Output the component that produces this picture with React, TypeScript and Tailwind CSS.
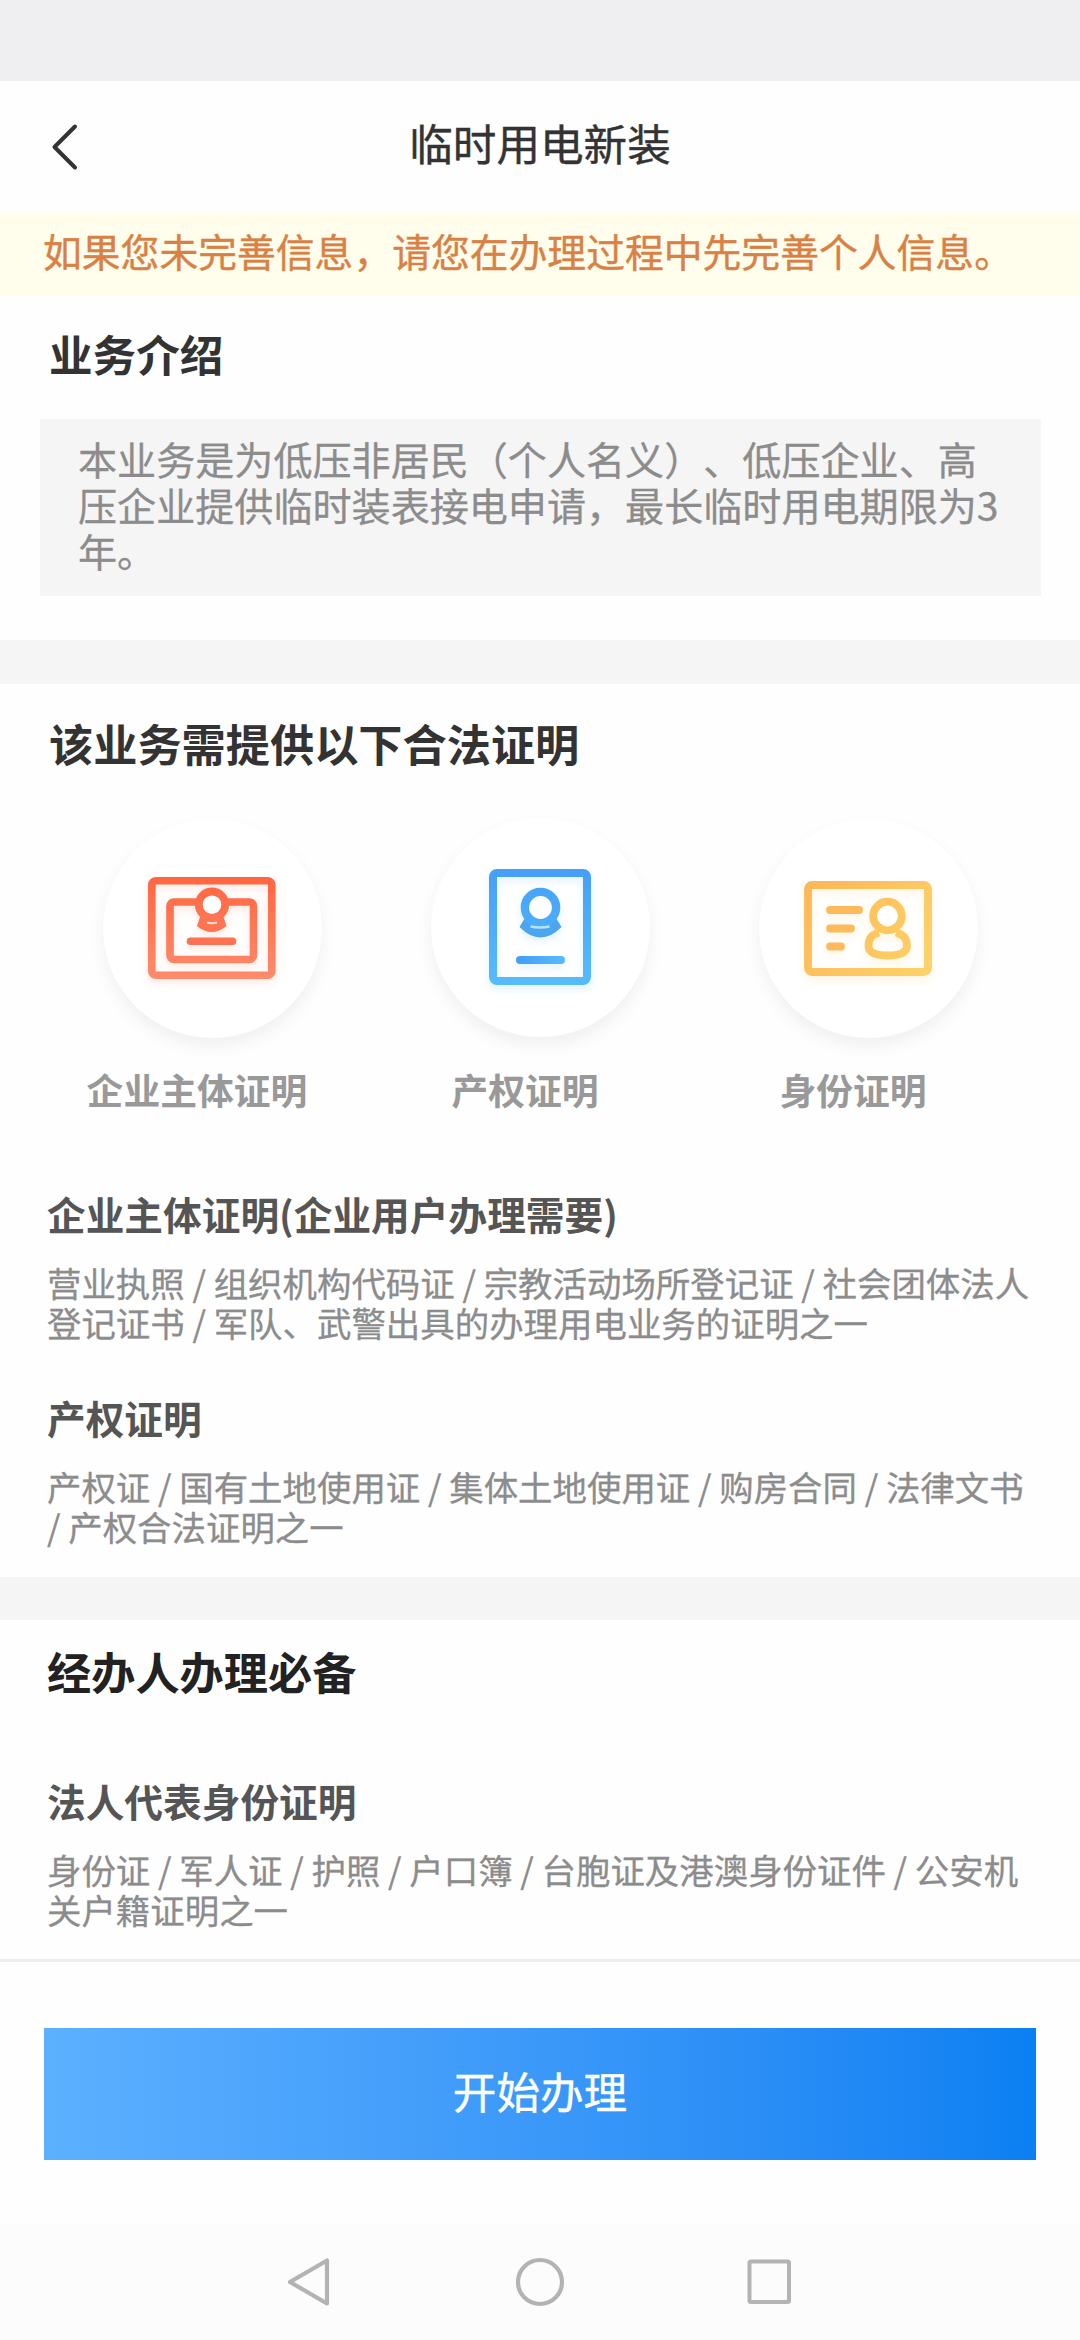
import React from "react";

function BusinessIcon() {
  return (
    <svg className="h-[126px] w-[146px] overflow-visible" viewBox="0 0 146 126" fill="none">
      <defs>
        <linearGradient id="orange" x1="0" y1="0" x2="0" y2="102" gradientUnits="userSpaceOnUse">
          <stop stopColor="#ff6640" />
          <stop offset="1" stopColor="#ff8a6c" />
        </linearGradient>
      </defs>
      <g className="drop-shadow-[0_4px_4px_rgba(255,110,70,0.16)]">
        <rect x="3.8" y="3.8" width="120" height="94.5" rx="4" stroke="url(#orange)" strokeWidth="7.6" />
        <rect x="22" y="25" width="83.5" height="57.5" rx="4" stroke="url(#orange)" strokeWidth="7.6" />
        <path d="M52 40 L49 49 Q63.500 61 78.500 49 L75.500 40 Z" fill="#fd7452" />
        <circle cx="64" cy="27.700" r="13.200" fill="#fff" stroke="url(#orange)" strokeWidth="7.800" />
        <path d="M59 45.500 Q64 47 69 45.500" stroke="#ffe3db" strokeWidth="2.200" />
        <path d="M42.500 64.300H84.500" stroke="#fd7250" strokeWidth="7.600" strokeLinecap="round" />
      </g>
    </svg>
  );
}

function PropertyIcon() {
  return (
    <svg className="h-[126px] w-[146px] overflow-visible" viewBox="0 0 146 126" fill="none">
      <defs>
        <linearGradient id="blue" x1="0" y1="0" x2="0" y2="117" gradientUnits="userSpaceOnUse">
          <stop stopColor="#469ff8" />
          <stop offset="1" stopColor="#55bdfb" />
        </linearGradient>
        <linearGradient id="blueLine" x1="27" y1="0" x2="77" y2="0" gradientUnits="userSpaceOnUse">
          <stop stopColor="#439df8" />
          <stop offset="1" stopColor="#58bdf8" />
        </linearGradient>
      </defs>
      <g className="drop-shadow-[0_4px_4px_rgba(70,170,250,0.16)]">
        <rect x="4" y="4" width="94" height="108" rx="4" stroke="url(#blue)" strokeWidth="8" />
        <path d="M36 49 L30.500 58 Q51.500 79 72.500 58 L67 49 Z" fill="#4aa6ee" />
        <circle cx="51.500" cy="38.500" r="15.600" fill="#fff" stroke="url(#blue)" strokeWidth="8.400" />
        <path d="M41.500 57.500 Q51 59.500 60.500 57.500" stroke="#b5e3fc" strokeWidth="2.400" />
        <path d="M31 91H72" stroke="url(#blueLine)" strokeWidth="8" strokeLinecap="round" />
      </g>
    </svg>
  );
}

function IdentityIcon() {
  return (
    <svg className="h-[126px] w-[146px] overflow-visible" viewBox="0 0 146 126" fill="none">
      <defs>
        <linearGradient id="amber" x1="0" y1="0" x2="128" y2="94" gradientUnits="userSpaceOnUse">
          <stop stopColor="#fdb656" />
          <stop offset="1" stopColor="#fdd369" />
        </linearGradient>
      </defs>
      <g className="drop-shadow-[0_4px_4px_rgba(255,180,70,0.16)]" stroke="url(#amber)" strokeWidth="7.800">
        <rect x="4" y="4" width="120" height="87" rx="4" />
        <path d="M75 51.500C67.500 53.500 64.500 58.500 64.500 64.500C64.500 71.500 72 74.500 83.700 74.500C95.500 74.500 103 71.500 103 64.500C103 58.500 99.500 53.500 92 51.500" />
        <circle cx="83.500" cy="35" r="14.300" fill="#fff" />
        <path d="M26 29H55M26 47.500H47M26 65.500H37" stroke="#fdba5a" strokeLinecap="round" />
      </g>
    </svg>
  );
}

const proofs = [
  { label: "企业主体证明", icon: <BusinessIcon />, disc: "pl-[45px] pt-[58px]" },
  { label: "产权证明", icon: <PropertyIcon />, disc: "pl-[58px] pt-[51px] -mt-[1px]" },
  { label: "身份证明", icon: <IdentityIcon />, disc: "pl-[45px] pt-[62px]" },
];

function Detail({ title, lines }: { title: string; lines: string[] }) {
  return (
    <section className="pl-[47px]">
      <h3 className="text-[38.7px] leading-[56px] font-bold text-[#555]">{title}</h3>
      <p className="mt-[21px] text-[34.450px] leading-[40.400px] text-[#8c8c8c] [-webkit-text-stroke:0.3px_#8c8c8c]">
        {lines.map((line) => (
          <span key={line} className="block">{line}</span>
        ))}
      </p>
    </section>
  );
}

export default function App() {
  return (
    <div
      lang="zh-CN"
      className="flex h-[2340px] w-[1080px] flex-col overflow-hidden bg-[#fefefe] font-['Noto_Sans_CJK_SC','Noto_Sans',sans-serif] whitespace-nowrap [text-spacing-trim:space-all]"
    >
      <div className="h-[81px] shrink-0 bg-[#efeff1]" />
      <header className="grid h-[131px] shrink-0 grid-cols-[200px_1fr_200px] items-center">
        <svg className="ml-[50px] h-12 w-7" viewBox="0 0 28 48" fill="none">
          <path d="M25 3.500L4.500 24L25 44.500" stroke="#333" strokeWidth="4" strokeLinecap="round" strokeLinejoin="round" />
        </svg>
        <h1 className="pb-[10px] text-center text-[43.6px] leading-[60px] text-[#333] [-webkit-text-stroke:0.4px_#333]">
          临时用电新装
        </h1>
      </header>
      <div className="flex h-[84px] shrink-0 items-center bg-[#fffdeb] pb-[9px] pl-[43px] text-[38.8px] leading-[56px] text-[#d98145] [-webkit-text-stroke:0.4px_#d98145]">
        如果您未完善信息，请您在办理过程中先完善个人信息。
      </div>

      <section className="h-[344px] shrink-0 pt-[26px] pr-[39px] pl-10">
        <h2 className="pl-[9px] text-[43.6px] leading-[62px] font-bold text-[#333]">业务介绍</h2>
        <p className="mt-[35px] h-[177px] bg-[#f5f5f5] pt-[16px] pl-[38px] text-[39.100px] leading-[46px] text-[#8c8c8c] [-webkit-text-stroke:0.3px_#8c8c8c]">
          本业务是为低压非居民（个人名义）、低压企业、高<br />
          压企业提供临时装表接电申请，最长临时用电期限为3<br />
          年。
        </p>
      </section>
      <div className="h-11 shrink-0 bg-[#f5f5f5]" />

      <section className="h-[893px] shrink-0 pt-[28px]">
        <h2 className="pl-[49px] text-[44.2px] leading-[62px] font-bold text-[#333]">该业务需提供以下合法证明</h2>
        <div className="mt-[45px] grid h-[297px] grid-cols-[328px_328px_328px] pl-[33px]">
          {proofs.map(({ label, icon, disc }) => (
            <div key={label} className="flex h-[297px] flex-col items-center justify-between">
              <div className={`ml-[31px] h-[219px] w-[219px] shrink-0 rounded-full bg-white shadow-[0_8px_16px_rgba(40,60,70,0.07)] ${disc}`}>
                {icon}
              </div>
              <span className="text-[36.8px] leading-[54px] font-bold text-[#999]">{label}</span>
            </div>
          ))}
        </div>
        <div className="mt-[69px] flex flex-col gap-[46px]">
          <Detail
            title="企业主体证明(企业用户办理需要)"
            lines={[
              "营业执照 / 组织机构代码证 / 宗教活动场所登记证 / 社会团体法人",
              "登记证书 / 军队、武警出具的办理用电业务的证明之一",
            ]}
          />
          <Detail
            title="产权证明"
            lines={[
              "产权证 / 国有土地使用证 / 集体土地使用证 / 购房合同 / 法律文书",
              "/ 产权合法证明之一",
            ]}
          />
        </div>
      </section>
      <div className="h-[43px] shrink-0 bg-[#f5f5f5]" />

      <section className="h-[339px] shrink-0 pt-[20px]">
        <h2 className="mb-[70px] pl-[47px] text-[44.2px] leading-[62px] font-bold text-[#222]">经办人办理必备</h2>
        <Detail
          title="法人代表身份证明"
          lines={[
            "身份证 / 军人证 / 护照 / 户口簿 / 台胞证及港澳身份证件 / 公安机",
            "关户籍证明之一",
          ]}
        />
      </section>
      <div className="h-[3px] shrink-0 bg-[#eee]" />

      <div className="h-[263px] shrink-0 px-11 pt-[66px]">
        <button className="h-[132px] w-full bg-linear-to-r from-[#5cb0ff] to-[#0a80f2] pb-[9px] text-[43.6px] leading-[62px] text-white [-webkit-text-stroke:0.4px_#fff]">
          开始办理
        </button>
      </div>
      <nav className="grid h-[115px] shrink-0 grid-cols-[230px_230px_230px] justify-center bg-[#fcfcfc] pt-[31px]">
        <svg className="mx-auto h-[52px] w-[52px]" viewBox="0 0 52 52" fill="none">
          <path d="M43 4.500V47.500L6 26Z" stroke="#b3b3b3" strokeWidth="4.200" strokeLinejoin="round" />
        </svg>
        <svg className="mx-auto h-[52px] w-[52px]" viewBox="0 0 52 52" fill="none">
          <circle cx="26" cy="26" r="22" stroke="#b3b3b3" strokeWidth="4.200" />
        </svg>
        <svg className="mx-auto h-[52px] w-[52px]" viewBox="0 0 52 52" fill="none">
          <rect x="5.500" y="5.500" width="39.500" height="40.500" rx="1.500" stroke="#b3b3b3" strokeWidth="4" />
        </svg>
      </nav>
    </div>
  );
}
